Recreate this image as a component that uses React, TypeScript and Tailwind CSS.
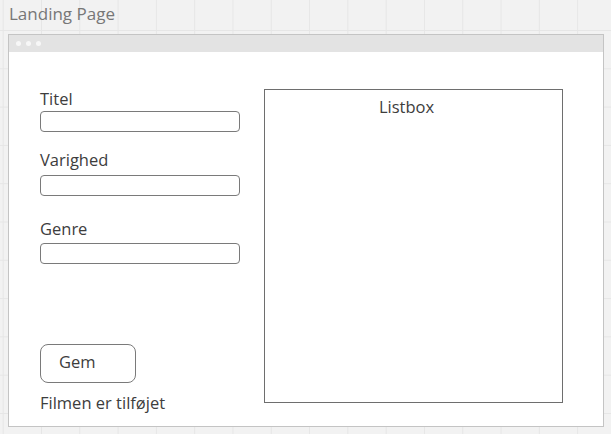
import React from 'react';

const font = { fontFamily: '"Open Sans", "Noto Sans", sans-serif' };

const Field: React.FC<{ label: string; top: string; gap: string }> = ({ label, top, gap }) => (
  <div className={top}>
    <p className="text-[16.5px] leading-[20px] text-[#3d3d3d]">{label}</p>
    <div className={`${gap} h-[21px] w-[200px] rounded-[4px] border border-[#7a7a7a] bg-white`} />
  </div>
);

export default function App() {
  return (
    <div
      style={font}
      className="h-[434px] w-full overflow-hidden bg-[#f2f2f2] bg-[linear-gradient(to_right,#e6e6e6_1px,transparent_1px),linear-gradient(to_bottom,#e6e6e6_1px,transparent_1px)] bg-[size:38.3px_38.3px] bg-[position:2.7px_30px] pt-[3px]"
    >
      {/* Page title */}
      <p className="pl-[9px] text-[17px] leading-[22px] text-[#777]">Landing Page</p>

      {/* Browser window */}
      <div className="ml-[8px] mt-[9px] h-[393px] w-[596px] border border-[#c4c4c4] bg-white">
        <div className="flex h-[17px] items-center gap-[5px] bg-[#e3e3e3] pl-[7px]">
          <span className="h-[5px] w-[5px] rounded-full bg-[#f7f7f7]" />
          <span className="h-[5px] w-[5px] rounded-full bg-[#f7f7f7]" />
          <span className="h-[5px] w-[5px] rounded-full bg-[#f7f7f7]" />
        </div>

        <div className="flex gap-[24px] pl-[31px]">
          {/* Form */}
          <div className="w-[200px] pt-[37px]">
            <Field label="Titel" top="" gap="mt-[2px]" />
            <Field label="Varighed" top="mt-[18px]" gap="mt-[5px]" />
            <Field label="Genre" top="mt-[23px]" gap="mt-[4px]" />

            <button className="mt-[80px] flex h-[39px] w-[96px] items-center rounded-[8px] border border-[#7a7a7a] bg-white pb-[2px] pl-[18px] text-[16.5px] text-[#3d3d3d]">
              Gem
            </button>
            <p className="mt-[10px] text-[16.5px] leading-[20px] text-[#3d3d3d]">Filmen er tilføjet</p>
          </div>

          {/* Listbox */}
          <div className="mt-[37px] h-[314px] w-[299px] border border-[#6e6e6e] bg-white pt-[7px] pr-[14px] text-center">
            <p className="text-[16.5px] leading-[20px] text-[#3d3d3d]">Listbox</p>
          </div>
        </div>
      </div>
    </div>
  );
}
